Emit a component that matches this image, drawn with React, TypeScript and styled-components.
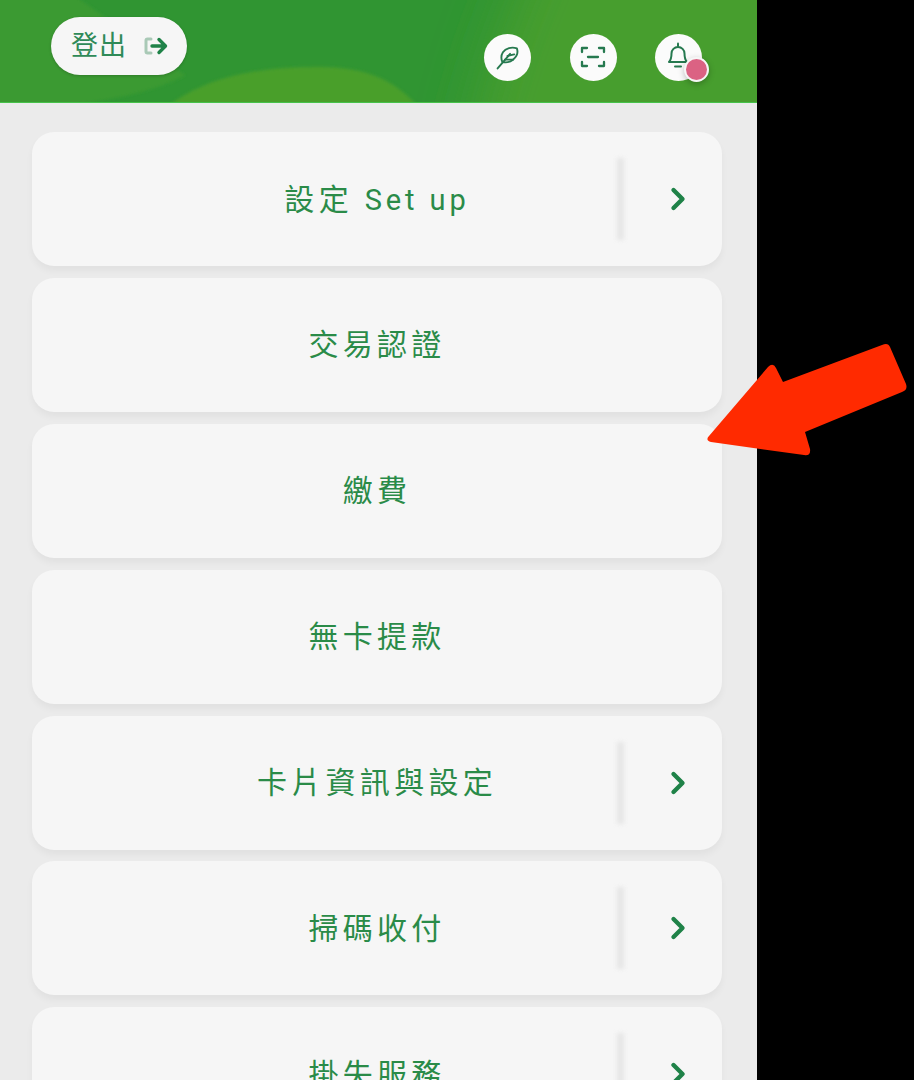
import React from "react";
import styled, { createGlobalStyle } from "styled-components";
import { ChevronRight } from "lucide-react";

const GlobalStyle = createGlobalStyle`
  html, body {
    margin: 0;
    padding: 0;
    height: 100%;
    background: #000;
    overflow: hidden;
  }
`;

const Phone = styled.div`
  width: 757px;
  height: 1080px;
  overflow: hidden;
  background: #ebebeb;
  font-family: Roboto, "Noto Sans CJK TC", sans-serif;
`;

// 상단 헤더
const Header = styled.header`
  position: relative;
  box-sizing: border-box;
  height: 103px;
  padding: 17px 55px 0 51px;
  display: flex;
  justify-content: space-between;
  align-items: flex-start;
  overflow: hidden;
  background: #309532;
  border-bottom: 1px solid #46c24a;
`;

const Wave = styled.svg`
  position: absolute;
  left: 0;
  top: 0;
  width: 100%;
  height: 100%;
`;

const LogoutButton = styled.div`
  position: relative;
  box-sizing: border-box;
  width: 136px;
  height: 58px;
  padding: 0 17px 0 20px;
  display: flex;
  align-items: center;
  justify-content: space-between;
  border-radius: 29px;
  background: #f6f6f6;
  color: #2f8a58;
  font-size: 27px;
  font-weight: 400;
  letter-spacing: 1px;
  box-shadow: 0 1px 3px rgba(0, 0, 0, 0.2);
`;

const LogoutText = styled.span`
  margin-top: -5px;
`;

const IconGroup = styled.div`
  position: relative;
  display: flex;
  gap: 38.5px;
  margin-top: 16.5px;
`;

const IconCircle = styled.div`
  position: relative;
  width: 47px;
  height: 47px;
  display: flex;
  align-items: center;
  justify-content: center;
  border-radius: 50%;
  background: #fbfbfb;
  color: #26794f;
`;

const BellWrap = styled.span`
  display: flex;
  margin: -3px 2px 0 0;
`;

const Badge = styled.span`
  position: absolute;
  right: -7px;
  bottom: -1px;
  box-sizing: border-box;
  width: 25px;
  height: 25px;
  border-radius: 50%;
  background: #db6283;
  border: 2px solid #f6f6f6;
  box-shadow: 0 2px 6px rgba(0, 0, 0, 0.25);
`;

const MenuList = styled.div`
  padding: 29px 35px 0 32px;
  display: flex;
  flex-direction: column;
  gap: 11.9px;
`;

const Card = styled.div`
  flex: none;
  height: 134px;
  display: grid;
  grid-template-columns: 105px 1fr 105px;
  align-items: center;
  border-radius: 22px;
  background: #f6f6f6;
  box-shadow: 0 5px 7px rgba(0, 0, 0, 0.045);
`;

const Label = styled.div`
  grid-column: 2;
  margin-top: -5px;
  text-align: center;
  color: #2a8b48;
  font-size: 30px;
  font-weight: 400;
  letter-spacing: 4.3px;
  white-space: nowrap;
`;

const LatinText = styled.span`
  font-size: 29px;
  letter-spacing: 3.9px;
`;

const Side = styled.div`
  grid-column: 3;
  height: 86px;
  display: flex;
  align-items: center;
`;

const Divider = styled.span`
  width: 7px;
  height: 82px;
  background: #e6e6e6;
  filter: blur(2px);
`;

const Chevron = styled(ChevronRight)`
  margin-left: 36px;
  color: #1f8248;
`;

const PointerArrow = styled.svg`
  position: absolute;
  left: 700px;
  top: 335px;
  width: 214px;
  height: 130px;
`;

const LogoutIcon: React.FC = () => (
  <svg width="26" height="22" viewBox="0 0 26 22" fill="none">
    <path d="M7 4H3.5A1.5 1.5 0 0 0 2 5.5v11A1.5 1.5 0 0 0 3.5 18H7" stroke="#a9c9b6" strokeWidth="3" strokeLinecap="round" />
    <path d="M8 11h13M15 4.5l6.5 6.5-6.5 6.5" stroke="#1f8248" strokeWidth="3.4" strokeLinecap="round" strokeLinejoin="round" />
  </svg>
);

const FeatherIcon: React.FC = () => (
  <svg width="25" height="25" viewBox="0 0 24 24" fill="none" stroke="currentColor" strokeWidth="1.8" strokeLinecap="round" strokeLinejoin="round">
    <path d="M21 3.2c-5-1.6-10.8-.2-13.4 3.8-1.9 3-1.8 6.2-.6 9.2 3.6 1 7.2.4 10.2-2.1C20.8 11.3 22.4 7.2 21 3.2z" />
    <path d="M2.5 22.5L14.500 8.500" />
    <path d="M9.500 14h8M12 10.500l6.500-1.500" />
  </svg>
);

const ScanIcon: React.FC = () => (
  <svg width="26" height="22" viewBox="0 0 26 22" fill="none" stroke="currentColor" strokeWidth="2.3" strokeLinecap="round" strokeLinejoin="round">
    <path d="M2 6V2h5M19 2h5v4M2 16v4h5M19 20h5v-4" />
    <path d="M8 11h10" />
  </svg>
);

const BellIcon: React.FC = () => (
  <svg width="22" height="27" viewBox="0 0 22 27" fill="none" stroke="currentColor" strokeWidth="2" strokeLinecap="round" strokeLinejoin="round">
    <path d="M11 1.500v2.500" />
    <path d="M2 20c1.800-2 2.500-4 2.500-8.500a6.500 6.500 0 0 1 13 0c0 4.500.7 6.500 2.500 8.500z" />
    <path d="M8 24.500h6" />
  </svg>
);

interface MenuItem {
  label: string;
  latin?: string;
  arrow: boolean;
}

const menuItems: MenuItem[] = [
  { label: "設定 ", latin: "Set up", arrow: true },
  { label: "交易認證", arrow: false },
  { label: "繳費", arrow: false },
  { label: "無卡提款", arrow: false },
  { label: "卡片資訊與設定", arrow: true },
  { label: "掃碼收付", arrow: true },
  { label: "掛失服務", arrow: true },
];

const App: React.FC = () => {
  return (
    <>
      <GlobalStyle />
      <Phone>
        <Header>
          <Wave viewBox="0 0 757 103" preserveAspectRatio="none">
            <defs>
              <filter id="soft" filterUnits="userSpaceOnUse" x="200" y="-200" width="900" height="500">
                <feGaussianBlur stdDeviation="26" />
              </filter>
              <filter id="edge">
                <feGaussianBlur stdDeviation="1.5" />
              </filter>
            </defs>
            <path d="M-10 -10H66C110 20 150 50 185 76C160 90 100 110 -10 110Z" fill="#3a9a30" filter="url(#edge)" />
            <path d="M165 110C205 76 265 66 330 68C372 70 398 84 420 110Z" fill="#499f2c" filter="url(#edge)" />
            <path d="M450 260C480 60 510 0 590 -160H1000V260Z" fill="#479e2e" filter="url(#soft)" />
          </Wave>
          <LogoutButton>
            <LogoutText>登出</LogoutText>
            <LogoutIcon />
          </LogoutButton>
          <IconGroup>
            <IconCircle>
              <FeatherIcon />
            </IconCircle>
            <IconCircle>
              <ScanIcon />
            </IconCircle>
            <IconCircle>
              <BellWrap>
                <BellIcon />
              </BellWrap>
              <Badge />
            </IconCircle>
          </IconGroup>
        </Header>
        <MenuList>
          {menuItems.map((item) => (
            <Card key={item.label}>
              <Label>
                {item.label}
                {item.latin && <LatinText>{item.latin}</LatinText>}
              </Label>
              {item.arrow && (
                <Side>
                  <Divider />
                  <Chevron size={36} strokeWidth={2.9} />
                </Side>
              )}
            </Card>
          ))}
        </MenuList>
      </Phone>
      <PointerArrow viewBox="700 335 214 130">
        <path
          d="M709 436L768 367Q773 362 776 368L783 382L882 345Q888 342 890 347L906 384Q908 390 902 392L805 432L810 449Q811 456 804 455L711 442Q705 440 709 436Z"
          fill="#ff2a00"
        />
      </PointerArrow>
    </>
  );
};

export default App;
